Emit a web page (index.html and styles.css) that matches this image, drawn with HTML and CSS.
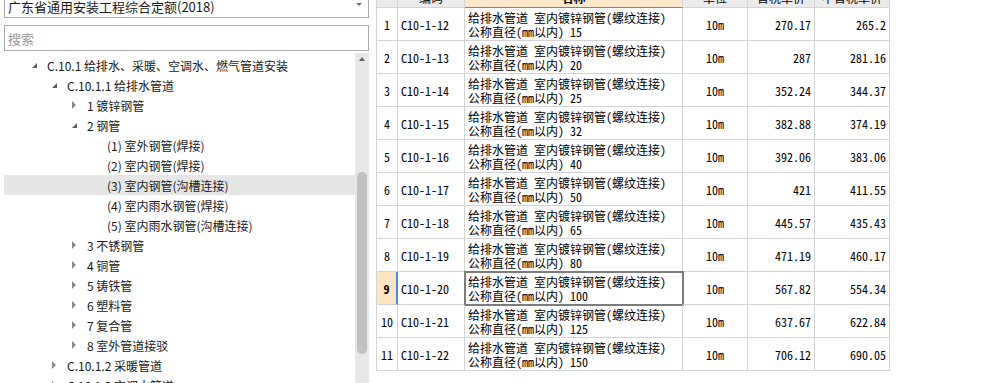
FILE: index.html
```html
<!DOCTYPE html>
<html lang="zh-CN">
<head>
    <meta charset="UTF-8">
    <meta name="viewport" content="width=device-width, initial-scale=1.0">
    <title>定额库</title>
    <link rel="stylesheet" href="styles.css">
</head>
<body>
    <div id="container">
        <div id="side">
            <div class="combo">
                <span class="combo-text">广东省通用安装工程综合定额(2018)</span>
                <span class="combo-arrow"></span>
            </div>
            <input class="search" type="text" placeholder="搜索">

            <div class="tree-wrap">
                <ul class="tree">
                    <li class="node lv0 open"><i></i>C.10.1 给排水、采暖、空调水、燃气管道安装</li>
                    <li class="node lv1 open"><i></i>C.10.1.1 给排水管道</li>
                    <li class="node lv2 closed"><i></i>1 镀锌钢管</li>
                    <li class="node lv2 open"><i></i>2 钢管</li>
                    <li class="node lv3"><i></i>(1) 室外钢管(焊接)</li>
                    <li class="node lv3"><i></i>(2) 室内钢管(焊接)</li>
                    <li class="node lv3 selected"><i></i>(3) 室内钢管(沟槽连接)</li>
                    <li class="node lv3"><i></i>(4) 室内雨水钢管(焊接)</li>
                    <li class="node lv3"><i></i>(5) 室内雨水钢管(沟槽连接)</li>
                    <li class="node lv2 closed"><i></i>3 不锈钢管</li>
                    <li class="node lv2 closed"><i></i>4 铜管</li>
                    <li class="node lv2 closed"><i></i>5 铸铁管</li>
                    <li class="node lv2 closed"><i></i>6 塑料管</li>
                    <li class="node lv2 closed"><i></i>7 复合管</li>
                    <li class="node lv2 closed"><i></i>8 室外管道接驳</li>
                    <li class="node lv1 closed"><i></i>C.10.1.2 采暖管道</li>
                    <li class="node lv1 closed"><i></i>C.10.1.3 空调水管道</li>
                </ul>
                <div class="vscroll">
                    <span class="up"></span>
                    <span class="thumb"></span>
                </div>
            </div>
        </div>

        <div id="grid">
            <div class="hd"></div>
            <div class="hd">编码</div>
            <div class="hd active">名称</div>
            <div class="hd">单位</div>
            <div class="hd">含税单价</div>
            <div class="hd">不含税单价</div>

            <div class="no">1</div><div class="code">C10-1-12</div><div class="name">给排水管道 室内镀锌钢管(螺纹连接)<br>公称直径(mm以内) 15</div><div class="unit">10m</div><div class="num">270.17</div><div class="num">265.2</div>
            <div class="no">2</div><div class="code">C10-1-13</div><div class="name">给排水管道 室内镀锌钢管(螺纹连接)<br>公称直径(mm以内) 20</div><div class="unit">10m</div><div class="num">287</div><div class="num">281.16</div>
            <div class="no">3</div><div class="code">C10-1-14</div><div class="name">给排水管道 室内镀锌钢管(螺纹连接)<br>公称直径(mm以内) 25</div><div class="unit">10m</div><div class="num">352.24</div><div class="num">344.37</div>
            <div class="no">4</div><div class="code">C10-1-15</div><div class="name">给排水管道 室内镀锌钢管(螺纹连接)<br>公称直径(mm以内) 32</div><div class="unit">10m</div><div class="num">382.88</div><div class="num">374.19</div>
            <div class="no">5</div><div class="code">C10-1-16</div><div class="name">给排水管道 室内镀锌钢管(螺纹连接)<br>公称直径(mm以内) 40</div><div class="unit">10m</div><div class="num">392.06</div><div class="num">383.06</div>
            <div class="no">6</div><div class="code">C10-1-17</div><div class="name">给排水管道 室内镀锌钢管(螺纹连接)<br>公称直径(mm以内) 50</div><div class="unit">10m</div><div class="num">421</div><div class="num">411.55</div>
            <div class="no">7</div><div class="code">C10-1-18</div><div class="name">给排水管道 室内镀锌钢管(螺纹连接)<br>公称直径(mm以内) 65</div><div class="unit">10m</div><div class="num">445.57</div><div class="num">435.43</div>
            <div class="no">8</div><div class="code">C10-1-19</div><div class="name">给排水管道 室内镀锌钢管(螺纹连接)<br>公称直径(mm以内) 80</div><div class="unit">10m</div><div class="num">471.19</div><div class="num">460.17</div>
            <div class="no current">9</div><div class="code">C10-1-20</div><div class="name focus">给排水管道 室内镀锌钢管(螺纹连接)<br>公称直径(mm以内) 100</div><div class="unit">10m</div><div class="num">567.82</div><div class="num">554.34</div>
            <div class="no">10</div><div class="code">C10-1-21</div><div class="name">给排水管道 室内镀锌钢管(螺纹连接)<br>公称直径(mm以内) 125</div><div class="unit">10m</div><div class="num">637.67</div><div class="num">622.84</div>
            <div class="no">11</div><div class="code">C10-1-22</div><div class="name">给排水管道 室内镀锌钢管(螺纹连接)<br>公称直径(mm以内) 150</div><div class="unit">10m</div><div class="num">706.12</div><div class="num">690.05</div>
        </div>
    </div>
</body>
</html>
```

FILE: styles.css
```css
body {
    padding: 0;
    margin: 0;
    background-color: #fff;
    overflow: hidden;
}

* {
    font-family: "Noto Sans CJK SC", sans-serif;
    box-sizing: border-box;
}

#container {
    display: flex;
    align-items: flex-start;
    height: 383px;
}

/* left: library tree */

#side {
    width: 369px;
    padding-left: 4px;
    flex-shrink: 0;
}

.combo {
    display: flex;
    align-items: center;
    justify-content: space-between;
    height: 24px;
    margin-top: -6px;
    padding: 0 6px 0 3px;
    border: 1px solid #acacac;
    font-size: 13px;
    color: #1a1a1a;
}

.combo-arrow {
    width: 0;
    height: 0;
    margin-bottom: 3px;
    border-style: solid;
    border-width: 3px 3px 0 3px;
    border-color: #6d6d6d transparent transparent transparent;
}

.search {
    display: block;
    width: 100%;
    height: 26px;
    margin: 7px 0 0 0;
    padding: 0 3px;
    border: 1px solid #acacac;
    outline: none;
    font-size: 13px;
}

.search::placeholder {
    color: #9a9a9a;
}

.tree-wrap {
    display: flex;
    margin-top: 2px;
    height: 340px;
}

.tree {
    flex: 1;
    list-style: none;
    margin: 0;
    padding: 2px 0 0 0;
}

.node {
    display: flex;
    align-items: center;
    height: 20px;
    font-size: 12px;
    color: #1a1a1a;
    white-space: nowrap;
}

.node i {
    width: 15px;
    height: 20px;
    display: flex;
    align-items: center;
}

.node.open i::before {
    content: "";
    width: 0;
    height: 0;
    margin-top: 1px;
    border-style: solid;
    border-width: 0 0 5px 5px;
    border-color: transparent transparent #5c5c5c transparent;
}

.node.closed i::before {
    content: "";
    width: 0;
    height: 0;
    border-style: solid;
    border-width: 4px 0 4px 4px;
    border-color: transparent transparent transparent #8a8a8a;
}

.lv0 { padding-left: 28px; }
.lv1 { padding-left: 48px; }
.lv2 { padding-left: 68px; }
.lv3 { padding-left: 88px; }

.node.selected {
    background-color: #e6e6e6;
}

.vscroll {
    width: 14px;
    background-color: #e8e8e8;
    display: flex;
    flex-direction: column;
    align-items: center;
}

.vscroll .up {
    width: 0;
    height: 0;
    margin-top: 4px;
    border-style: solid;
    border-width: 0 3.5px 4px 3.5px;
    border-color: transparent transparent #606060 transparent;
}

.vscroll .thumb {
    width: 10px;
    height: 182px;
    margin-top: 111px;
    border-radius: 5px;
    background-color: #c1c1c1;
}

/* right: quota grid */

#grid {
    display: grid;
    grid-template-columns: 21px 67px 218px 65px 67px 75px;
    grid-auto-rows: 33px;
    grid-template-rows: 21px;
    margin: -14px 0 0 7px;
    border-left: 1px solid #d4d4d4;
    border-top: 1px solid #d4d4d4;
}

#grid > div {
    display: flex;
    align-items: center;
    border-right: 1px solid #d4d4d4;
    border-bottom: 1px solid #d4d4d4;
    font-family: "Noto Sans Mono CJK SC", "Noto Sans CJK SC", monospace;
    font-size: 12px;
    color: #000;
    white-space: nowrap;
}

#grid .hd {
    justify-content: center;
    background-color: #ebebeb;
}

#grid .hd.active {
    background-color: #fde8cc;
    border-bottom: 1px solid #4a90e2;
    font-weight: bold;
}

#grid .no,
#grid .unit {
    justify-content: center;
}

#grid .no.current {
    background-color: #fde4c2;
    border-right: 2px solid #3d8ee6;
    font-weight: bold;
}

#grid .code {
    padding-left: 3px;
}

#grid .name {
    padding: 1px 3px 0 3px;
    line-height: 14px;
}

#grid .name.focus {
    outline: 2px solid #7d7d7d;
    outline-offset: -1px;
}

#grid .num {
    justify-content: flex-end;
    padding-right: 3px;
}
```
